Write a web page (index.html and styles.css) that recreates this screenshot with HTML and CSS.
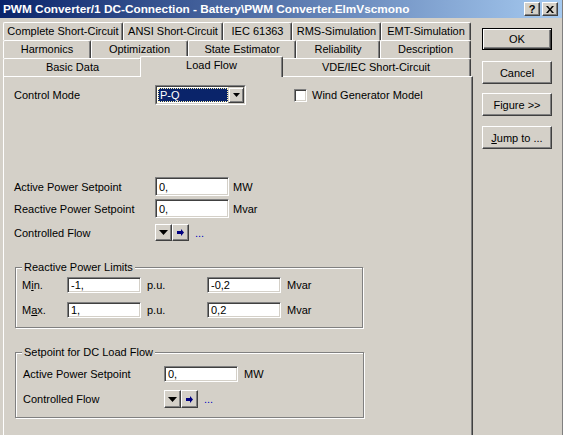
FILE: index.html
```html
<!DOCTYPE html>
<html>
<head>
<meta charset="utf-8">
<link rel="stylesheet" href="styles.css">
</head>
<body>
<div class="win">
  <div class="titlebar">
    <span class="title">PWM Converter/1 DC-Connection - Battery\PWM Converter.ElmVscmono</span>
    <div class="tbtns">
      <span class="tbtn">?</span>
      <span class="tbtn"><svg width="8" height="7" viewBox="0 0 8 7"><path d="M0 0h2l2 2.5L6 0h2L5 3.5 8 7H6L4 4.5 2 7H0l3-3.5z" fill="#000"/></svg></span>
    </div>
  </div>
  <div class="body">
    <div class="left">
      <div class="tabs">
        <div class="tabrow">
          <div class="tab w120">Complete Short-Circuit</div>
          <div class="tab w100">ANSI Short-Circuit</div>
          <div class="tab w69">IEC 61363</div>
          <div class="tab w89">RMS-Simulation</div>
          <div class="tab w90">EMT-Simulation</div>
        </div>
        <div class="tabrow">
          <div class="tab w88">Harmonics</div>
          <div class="tab w97">Optimization</div>
          <div class="tab w108">State Estimator</div>
          <div class="tab w84">Reliability</div>
          <div class="tab w91">Description</div>
        </div>
        <div class="tabrow">
          <div class="tab w139">Basic Data</div>
          <div class="tab w139 active">Load Flow</div>
          <div class="tab w190">VDE/IEC Short-Circuit</div>
        </div>
      </div>
      <div class="panel">
        <div class="row cm">
          <span class="lbl">Control Mode</span>
          <div class="combo">
            <div class="combo-in">
              <span class="sel">P-Q</span>
              <span class="dd"><svg width="7" height="4" viewBox="0 0 7 4"><path d="M0 0h7L3.5 4z" fill="#000"/></svg></span>
            </div>
          </div>
          <span class="chk"></span>
          <span class="chklbl">Wind Generator Model</span>
        </div>
        <div class="row r-ap">
          <span class="lbl">Active Power Setpoint</span>
          <span class="inp">0,</span>
          <span class="unit">MW</span>
        </div>
        <div class="row r-rp">
          <span class="lbl">Reactive Power Setpoint</span>
          <span class="inp">0,</span>
          <span class="unit">Mvar</span>
        </div>
        <div class="row r-cf">
          <span class="lbl">Controlled Flow</span>
          <span class="sbtn"><svg width="9" height="5" viewBox="0 0 9 5"><path d="M0 0h9L4.5 5z" fill="#000"/></svg></span>
          <span class="sbtn"><svg width="7" height="7" viewBox="0 0 7 7"><path d="M0 2h4V0l3 3.5L4 7V5H0z" fill="#000080"/></svg></span>
          <span class="dots">...</span>
        </div>

        <div class="group g1">
          <span class="legend">Reactive Power Limits</span>
          <div class="grow">
            <span class="glbl">M<u>i</u>n.</span>
            <span class="inp gi">-1,</span>
            <span class="pu">p.u.</span>
            <span class="inp gi">-0,2</span>
            <span class="unit2">Mvar</span>
          </div>
          <div class="grow g-max">
            <span class="glbl">M<u>a</u>x.</span>
            <span class="inp gi">1,</span>
            <span class="pu">p.u.</span>
            <span class="inp gi">0,2</span>
            <span class="unit2">Mvar</span>
          </div>
        </div>

        <div class="group g2">
          <span class="legend">Setpoint for DC Load Flow</span>
          <div class="grow">
            <span class="glbl2">Active Power Setpoint</span>
            <span class="inp gi">0,</span>
            <span class="unit2">MW</span>
          </div>
          <div class="grow g-cf">
            <span class="glbl2">Controlled Flow</span>
            <span class="sbtn tall"><svg width="9" height="5" viewBox="0 0 9 5"><path d="M0 0h9L4.5 5z" fill="#000"/></svg></span>
            <span class="sbtn tall"><svg width="7" height="7" viewBox="0 0 7 7"><path d="M0 2h4V0l3 3.5L4 7V5H0z" fill="#000080"/></svg></span>
            <span class="dots">...</span>
          </div>
        </div>
      </div>
    </div>
    <div class="right">
      <div class="btn def"><span>OK</span></div>
      <div class="btn b-cancel">Cancel</div>
      <div class="btn b-fig">Figure &gt;&gt;</div>
      <div class="btn b-jump"><span><u>J</u>ump to ...</span></div>
    </div>
  </div>
</div>
</body>
</html>
```

FILE: styles.css
```css
html, body {
  margin: 0;
  padding: 0;
  background: #D4D0C8;
}

.win {
  width: 563px;
  height: 435px;
  box-sizing: border-box;
  background: #D4D0C8;
  border-right: 1px solid #808080;
  overflow: hidden;
  font-family: "Liberation Sans", Arial, sans-serif;
  font-size: 11px;
  color: #000;
}

.titlebar {
  height: 18px;
  background: linear-gradient(to right, #0A246A, #A6CAF0);
  display: flex;
  align-items: center;
  padding-left: 3px;
}

.title {
  flex: 1;
  color: #fff;
  font-weight: bold;
  font-size: 11.8px;
  white-space: nowrap;
  overflow: hidden;
}

.tbtns {
  display: flex;
  gap: 2px;
  margin-right: 4px;
}

.tbtn {
  width: 16px;
  height: 14px;
  box-sizing: border-box;
  background: #D4D0C8;
  border: 1px solid;
  border-color: #fff #404040 #404040 #fff;
  box-shadow: inset -1px -1px #808080;
  display: flex;
  align-items: center;
  justify-content: center;
  font-weight: bold;
  font-size: 11px;
  line-height: 12px;
}

.body {
  display: flex;
}

.left {
  margin-left: 3px;
  width: 470px;
}

.tabs {
  padding-top: 4px;
}

.tabrow {
  display: flex;
  height: 18px;
}

.tab {
  flex: none;
  box-sizing: border-box;
  height: 18px;
  border-top: 1px solid #fff;
  border-left: 1px solid #fff;
  border-right: 1px solid #404040;
  box-shadow: inset -1px 0 #808080;
  border-radius: 2px 2px 0 0;
  text-align: center;
  line-height: 16px;
  white-space: nowrap;
  background: #D4D0C8;
}

.w69 { width: 69px; }
.w84 { width: 84px; }
.w88 { width: 88px; }
.w89 { width: 89px; }
.w90 { width: 90px; }
.w91 { width: 91px; }
.w97 { width: 97px; }
.w100 { width: 100px; }
.w108 { width: 108px; }
.w120 { width: 120px; }
.w139 { width: 139px; }
.w190 { width: 190px; }

.tab.active {
  width: 143px;
  height: 21px;
  margin: -2px -2px 0 -2px;
  position: relative;
  z-index: 2;
  line-height: 17px;
}

.panel {
  box-sizing: border-box;
  width: 470px;
  height: 359px;
  border-left: 1px solid #fff;
  border-top: 1px solid #fff;
  border-right: 1px solid #404040;
  box-shadow: inset -1px 0 #808080;
  padding: 8px 0 0 10px;
}

.row {
  display: flex;
  align-items: center;
}

.lbl {
  width: 141px;
  flex: none;
  white-space: nowrap;
}

.cm {
  height: 20px;
}

.combo {
  width: 91px;
  height: 20px;
  box-sizing: border-box;
  border: 1px solid;
  border-color: #808080 #fff #fff #808080;
  display: flex;
}

.combo-in {
  flex: 1;
  border: 1px solid;
  border-color: #404040 #D4D0C8 #D4D0C8 #404040;
  background: #fff;
  display: flex;
  align-items: stretch;
}

.sel {
  flex: 1;
  margin: 1px 0 1px 1px;
  background: #0A246A;
  color: #fff;
  border: 1px dotted #fff4b0;
  display: flex;
  align-items: center;
  padding-left: 1px;
  line-height: 1;
}

.dd {
  width: 16px;
  box-sizing: border-box;
  background: #D4D0C8;
  border: 1px solid;
  border-color: #D4D0C8 #404040 #404040 #D4D0C8;
  box-shadow: inset 1px 1px #fff, inset -1px -1px #808080;
  display: flex;
  align-items: center;
  justify-content: center;
}

.chk {
  width: 13px;
  height: 13px;
  box-sizing: border-box;
  margin-left: 48px;
  border: 1px solid;
  border-color: #808080 #fff #fff #808080;
  box-shadow: inset 1px 1px #404040, inset -1px -1px #D4D0C8;
  background: #fff;
}

.chklbl {
  margin-left: 5px;
}

.inp {
  width: 74px;
  height: 19px;
  box-sizing: border-box;
  border: 1px solid;
  border-color: #808080 #fff #fff #808080;
  box-shadow: inset 1px 1px #404040, inset -1px -1px #D4D0C8;
  background: #fff;
  padding-left: 3px;
  display: flex;
  align-items: center;
  flex: none;
}

.unit {
  margin-left: 4px;
}

.r-ap {
  margin-top: 72px;
}

.r-rp {
  margin-top: 3px;
}

.r-cf {
  margin-top: 6px;
  height: 17px;
}

.sbtn {
  width: 17px;
  height: 17px;
  box-sizing: border-box;
  background: #D4D0C8;
  border: 1px solid;
  border-color: #fff #404040 #404040 #fff;
  box-shadow: inset -1px -1px #808080;
  display: flex;
  align-items: center;
  justify-content: center;
  flex: none;
}

.sbtn.tall {
  height: 18px;
}

.dots {
  margin-left: 6px;
  color: #0000c0;
}

.group {
  position: relative;
  box-sizing: border-box;
  margin-left: 1px;
  border: 1px solid #808080;
  box-shadow: inset 1px 1px #fff, 1px 1px #fff;
}

.legend {
  position: absolute;
  top: -7px;
  left: 6px;
  padding: 0 2px;
  line-height: 13px;
  background: #D4D0C8;
  white-space: nowrap;
}

.g1 {
  margin-top: 26px;
  width: 348px;
  height: 61px;
  padding: 9px 0 0 6px;
}

.g2 {
  margin-top: 24px;
  width: 349px;
  height: 66px;
  padding: 13px 0 0 7px;
}

.grow {
  display: flex;
  align-items: center;
  height: 16px;
}

.inp.gi {
  height: 16px;
}

.glbl {
  width: 45px;
  flex: none;
}

.glbl2 {
  width: 141px;
  flex: none;
}

.pu {
  width: 60px;
  margin-left: 6px;
  flex: none;
}

.unit2 {
  margin-left: 6px;
}

.g-max {
  margin-top: 9px;
}

.g-cf {
  margin-top: 8px;
  height: 18px;
}

.right {
  margin-left: 9px;
  width: 70px;
  padding-top: 10px;
  display: flex;
  flex-direction: column;
}

.btn {
  box-sizing: border-box;
  width: 70px;
  height: 23px;
  background: #D4D0C8;
  border: 1px solid;
  border-color: #fff #404040 #404040 #fff;
  box-shadow: inset -1px -1px #808080;
  display: flex;
  align-items: center;
  justify-content: center;
  font-size: 11px;
}

.btn.def {
  height: 22px;
  border: 1px solid #000;
  box-shadow: inset 1px 1px #fff, inset -1px -1px #404040, inset -2px -2px #808080;
}

.b-cancel {
  margin-top: 11px;
}

.b-fig {
  margin-top: 9px;
}

.b-jump {
  margin-top: 10px;
}
```
